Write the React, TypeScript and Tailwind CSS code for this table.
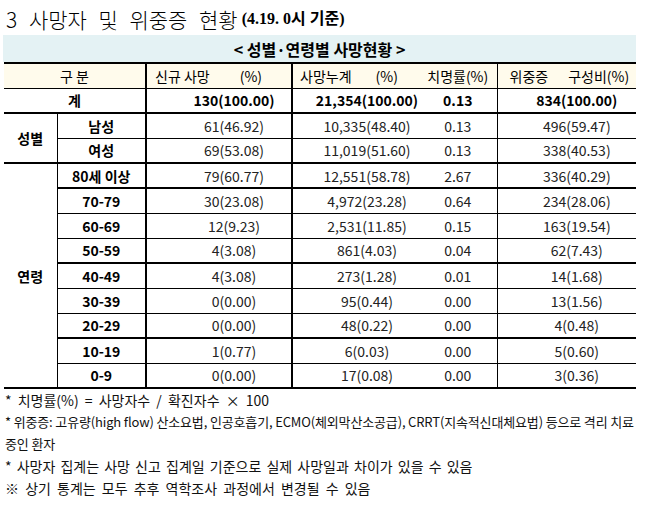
const sexRows = [
  { label: "남성", n: "61(46.92)", c: "10,335(48.40)", r: "0.13", s: "496(59.47)", b: "border-b" },
  { label: "여성", n: "69(53.08)", c: "11,019(51.60)", r: "0.13", s: "338(40.53)", b: "border-b-2" },
];

const ageRows = [
  { label: "80세 이상", n: "79(60.77)", c: "12,551(58.78)", r: "2.67", s: "336(40.29)", b: "border-b-2" },
  { label: "70-79", n: "30(23.08)", c: "4,972(23.28)", r: "0.64", s: "234(28.06)", b: "border-b" },
  { label: "60-69", n: "12(9.23)", c: "2,531(11.85)", r: "0.15", s: "163(19.54)", b: "border-b" },
  { label: "50-59", n: "4(3.08)", c: "861(4.03)", r: "0.04", s: "62(7.43)", b: "border-b-2" },
  { label: "40-49", n: "4(3.08)", c: "273(1.28)", r: "0.01", s: "14(1.68)", b: "border-b" },
  { label: "30-39", n: "0(0.00)", c: "95(0.44)", r: "0.00", s: "13(1.56)", b: "border-b" },
  { label: "20-29", n: "0(0.00)", c: "48(0.22)", r: "0.00", s: "4(0.48)", b: "border-b-2" },
  { label: "10-19", n: "1(0.77)", c: "6(0.03)", r: "0.00", s: "5(0.60)", b: "border-b" },
  { label: "0-9", n: "0(0.00)", c: "17(0.08)", r: "0.00", s: "3(0.36)", b: "border-b-2" },
];

type Row = { label: string; n: string; c: string; r: string; s: string; b: string };

function DataCells({ row }: { row: Row }) {
  return (
    <>
      <td className={`${row.b} border-r-2 border-black pl-[30px] text-center`}>{row.n}</td>
      <td className={`${row.b} border-black pl-[22px] text-center`}>{row.c}</td>
      <td className={`${row.b} border-r border-black text-center`}>{row.r}</td>
      <td className={`${row.b} border-black pl-5 text-center`}>{row.s}</td>
    </>
  );
}

export default function App() {
  return (
    <div className="w-[649px] h-[506px] bg-white text-black font-['Noto_Sans_CJK_KR',sans-serif] overflow-hidden">
      {/* Title */}
      <div className="h-[35px] flex items-center pl-[6px] pt-[3px]">
        <span className="text-[21px] font-light leading-none [word-spacing:7px]">3 사망자 및 위중증 현황</span>
        <span className="ml-[4px] text-[16px] font-bold leading-none font-['Liberation_Serif','Noto_Sans_CJK_KR',serif]">
          (4.19. 0시 기준)
        </span>
      </div>

      {/* Caption bar */}
      <div className="ml-[3px] w-[633px] h-[27px] bg-[#e4f2f4] flex items-center justify-center text-[16px] font-bold leading-none">
        &lt; 성별·연령별 사망현황 &gt;
      </div>

      {/* Table */}
      <table className="ml-[4px] w-[632px] table-fixed border-collapse text-[14px] leading-none text-[#222]">
        <colgroup>
          <col className="w-[53px]" />
          <col className="w-[89px]" />
          <col className="w-[146px]" />
          <col className="w-[127px]" />
          <col className="w-[78px]" />
          <col className="w-[139px]" />
        </colgroup>
        <tbody>
          <tr className="h-[25px] bg-[#fffbec] text-black">
            <td colSpan={2} className="border-t-2 border-b border-r-2 border-black text-center">구 분</td>
            <td className="border-t-2 border-b border-r-2 border-black pl-2">
              신규 사망<span className="ml-[30px]">(%)</span>
            </td>
            <td className="border-t-2 border-b border-black pl-[7px]">
              사망누계<span className="ml-[24px]">(%)</span>
            </td>
            <td className="border-t-2 border-b border-r border-black text-center">치명률(%)</td>
            <td className="border-t-2 border-b border-black pl-3">
              위중증<span className="ml-[20px]">구성비(%)</span>
            </td>
          </tr>
          <tr className="h-[25px] font-bold text-black">
            <td colSpan={2} className="border-b-2 border-r-2 border-black text-center">계</td>
            <td className="border-b-2 border-r-2 border-black pl-[30px] text-center">130(100.00)</td>
            <td className="border-b-2 border-black pl-[22px] text-center">21,354(100.00)</td>
            <td className="border-b-2 border-r border-black text-center">0.13</td>
            <td className="border-b-2 border-black pl-5 text-center">834(100.00)</td>
          </tr>
          {sexRows.map((row, i) => (
            <tr key={row.label} className="h-[25px]">
              {i === 0 && (
                <td rowSpan={2} className="border-b-2 border-r border-black text-center font-bold text-black">
                  성별
                </td>
              )}
              <td className={`${row.b} border-r-2 border-black text-center font-bold text-black`}>{row.label}</td>
              <DataCells row={row} />
            </tr>
          ))}
          {ageRows.map((row, i) => (
            <tr key={row.label} className="h-[25px]">
              {i === 0 && (
                <td rowSpan={9} className="border-b-2 border-r border-black text-center font-bold text-black">
                  연령
                </td>
              )}
              <td className={`${row.b} border-r-2 border-black text-center font-bold text-black`}>{row.label}</td>
              <DataCells row={row} />
            </tr>
          ))}
        </tbody>
      </table>

      {/* Notes */}
      <div className="pl-[5px] text-[14px] text-[#111] leading-[22px]">
        <p className="[word-spacing:3px]">* 치명률(%) = 사망자수 / 확진자수 × 100</p>
        <p className="text-[13px] tracking-[-0.15px] whitespace-nowrap">
          * 위중증: 고유량(high flow) 산소요법, 인공호흡기, ECMO(체외막산소공급), CRRT(지속적신대체요법) 등으로 격리 치료
        </p>
        <p className="text-[13px] tracking-[-0.15px]">중인 환자</p>
        <p className="[word-spacing:2px]">* 사망자 집계는 사망 신고 집계일 기준으로 실제 사망일과 차이가 있을 수 있음</p>
        <p className="[word-spacing:3px]">※ 상기 통계는 모두 추후 역학조사 과정에서 변경될 수 있음</p>
      </div>
    </div>
  );
}
